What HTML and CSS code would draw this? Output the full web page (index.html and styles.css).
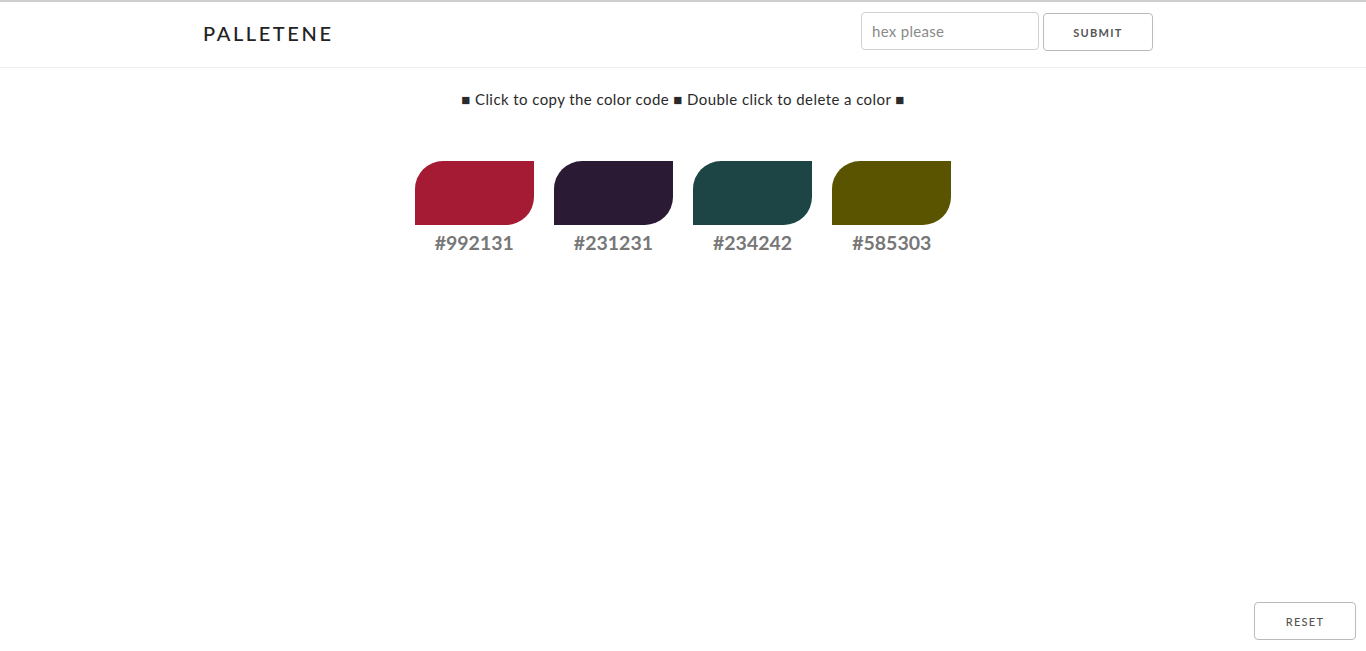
FILE: index.html
```html
<!DOCTYPE html>
<html lang="en">
<head>
<meta charset="utf-8">
<title>Palletene</title>
<link rel="stylesheet" href="styles.css">
</head>
<body>
<header class="topbar">
  <div class="container">
    <div class="logo">PALLETENE</div>
    <form class="hex-form">
      <input class="hex-input" type="text" placeholder="hex please">
      <button class="btn btn-submit" type="button">Submit</button>
    </form>
  </div>
</header>
<main>
  <p class="hint">■ Click to copy the color code ■ Double click to delete a color ■</p>
  <div class="palette">
    <div class="chip">
      <div class="swatch" style="background:#a51b34"></div>
      <div class="code">#992131</div>
    </div>
    <div class="chip">
      <div class="swatch" style="background:#2a1a34"></div>
      <div class="code">#231231</div>
    </div>
    <div class="chip">
      <div class="swatch" style="background:#1d4545"></div>
      <div class="code">#234242</div>
    </div>
    <div class="chip">
      <div class="swatch" style="background:#5a5300"></div>
      <div class="code">#585303</div>
    </div>
  </div>
</main>
<button class="btn btn-reset" type="button">Reset</button>
</body>
</html>
```

FILE: styles.css
```css
html, body {
  margin: 0;
  padding: 0;
}
body {
  border-top: 2px solid #cfcfcf;
  font-family: "Lato", "Open Sans", sans-serif;
  color: #222;
  background: #fff;
  min-height: 649px;
}
.topbar {
  height: 65px;
  border-bottom: 1px solid #eeeeee;
}
.container {
  width: 960px;
  margin: 0 auto;
  padding-right: 10px;
  box-sizing: border-box;
  display: flex;
  justify-content: space-between;
  align-items: flex-start;
}
.logo {
  font-size: 20px;
  font-weight: 500;
  letter-spacing: 2.6px;
  color: #222;
  margin-top: 19px;
  line-height: 24px;
}
.hex-form {
  display: flex;
  align-items: flex-start;
  gap: 4px;
  margin: 10px 0 0;
}
.hex-input {
  width: 178px;
  height: 38px;
  box-sizing: border-box;
  border: 1px solid #d1d1d1;
  border-radius: 4px;
  padding: 6px 10px;
  font-family: inherit;
  font-size: 15px;
  letter-spacing: 0.3px;
  color: #333;
  outline: none;
}
.hex-input::placeholder {
  color: #8a8a8a;
}
.btn {
  height: 38px;
  box-sizing: border-box;
  background: #fff;
  border: 1px solid #bbb;
  border-radius: 4px;
  font-family: inherit;
  font-size: 11px;
  font-weight: 700;
  letter-spacing: 1.3px;
  text-transform: uppercase;
  color: #555;
  padding: 0;
  cursor: pointer;
}
.btn-submit {
  width: 110px;
  margin-top: 1px;
}
.btn-reset {
  position: fixed;
  right: 10px;
  bottom: 11px;
  width: 102px;
  font-weight: 500;
}
.hint {
  text-align: center;
  font-size: 15px;
  line-height: 20px;
  letter-spacing: 0.42px;
  margin: 21px 0 0;
  color: #2a2a2a;
}
.palette {
  display: flex;
  justify-content: center;
  gap: 20px;
  margin-top: 52px;
}
.chip {
  display: flex;
  flex-direction: column;
  align-items: stretch;
  cursor: pointer;
}
.swatch {
  height: 64px;
  border-radius: 28px 0 28px 0;
}
.code {
  padding: 0 20px;
  margin-top: 6px;
  font-size: 19.5px;
  line-height: 24px;
  font-weight: 700;
  color: #777;
  text-align: center;
}
```
